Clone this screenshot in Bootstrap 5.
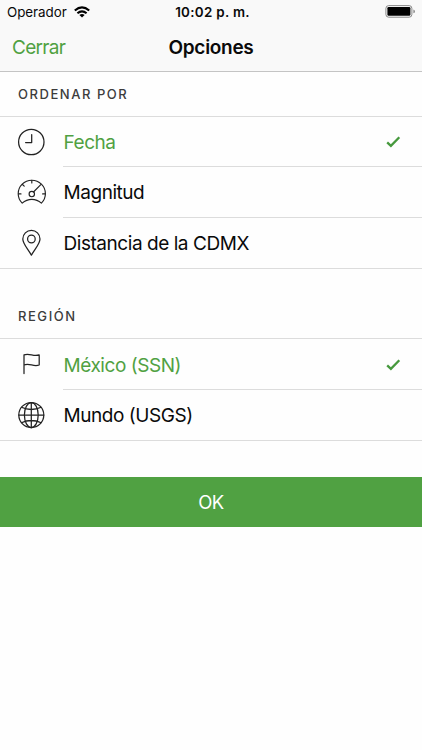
<!DOCTYPE html>
<html lang="es">
<head>
<meta charset="utf-8">
<meta name="viewport" content="width=device-width, initial-scale=1">
<title>Opciones</title>
<link href="https://cdn.jsdelivr.net/npm/bootstrap@5.3.0/dist/css/bootstrap.min.css" rel="stylesheet">
<style>
body{font-family:Inter,"Liberation Sans",sans-serif;color:#0a0a0a;font-size:19px;line-height:24px;background:#fefefe}
svg{display:block;flex:none}
.top-area{background:#f9f9f9;border-bottom:1px solid #c4c4c4;height:72px}
.status{height:23px;font-size:13.4px;line-height:22px;padding:0 7px}
.status-time{font-weight:600;letter-spacing:.3px;padding-left:3px}
.status-side{width:120px}
.carrier{letter-spacing:-.05px}
.wifi{margin-left:7px}
.title-bar{height:49px;padding:1px 12px 0}
.title-side{width:90px}
.title-link{color:#50a142;text-decoration:none;letter-spacing:-.7px}
.title-text{font-size:19px;font-weight:600;letter-spacing:-.3px}
.section-title{font-size:13px;line-height:20px;font-weight:500;letter-spacing:1.55px;color:#3c3c3c;margin:0;padding-left:18px}
.h-first{height:44px}
.h-second{height:69px}
.options{border-top:1px solid #dcdcdc;border-bottom:1px solid #dcdcdc;border-radius:0}
.option{height:50px;padding:0;border:0;background:transparent;color:inherit}
.options-sort .option:first-child{height:49px}
.option + .option{height:51px}
.option + .option .option-body{border-top:1px solid #dcdcdc}
.option-icon{width:63px;padding-left:17px}
.option-body{padding-right:21px;letter-spacing:-.45px}
.option-body span{padding:2px 0 0 .5px}
.options-region .chosen .option-body{padding-top:1px}
.option.chosen{color:#50a142}
.option-icon svg{stroke:#222;fill:none;stroke-width:1.25;stroke-linecap:round;stroke-linejoin:round}
.option-icon .gauge{stroke-width:1.15}
.ok{margin-top:36px;height:50px;border:0;border-radius:0;background:#50a142;color:#fff;font-size:18.5px;padding:2px 0 0;letter-spacing:-.5px}
</style>
<script src="https://cdn.jsdelivr.net/npm/bootstrap@5.3.0/dist/js/bootstrap.bundle.min.js"></script>
</head>
<body>
<header class="top-area">
  <div class="status d-flex justify-content-between align-items-center">
    <div class="status-side d-flex align-items-center">
      <span class="carrier">Operador</span>
      <svg class="wifi" width="16" height="12" viewBox="0.4 0 16 12" fill="none" stroke="#000" stroke-width="2.1"><path d="M1.2 4.5Q8.4-1.8 15.6 4.5M3.8 7.3Q8.4 3.3 13 7.3"/><path d="M8.4 11.6 5.8 9Q8.4 6.9 11 9Z" fill="#000" stroke="none"/></svg>
    </div>
    <div class="status-time">10:02 p. m.</div>
    <div class="status-side d-flex justify-content-end">
      <svg width="30" height="13" viewBox="0 0 30 13"><rect x=".9" y=".6" width="26" height="11.6" rx="2.8" fill="none" stroke="#888" stroke-width="1"/><rect x="2.4" y="2.1" width="23" height="8.6" rx="1.2" fill="#000"/><path d="M28.4 4.5Q30 5 30 6.4T28.4 8.3Z" fill="#888"/></svg>
    </div>
  </div>
  <nav class="title-bar d-flex justify-content-between align-items-center">
    <div class="title-side"><a class="title-link" href="#">Cerrar</a></div>
    <div class="title-text">Opciones</div>
    <div class="title-side"></div>
  </nav>
</header>
<main>
  <h2 class="section-title h-first d-flex align-items-center">ORDENAR POR</h2>
  <div class="options options-sort list-group">
    <div class="option chosen list-group-item d-flex">
      <div class="option-icon d-flex align-items-center"><svg width="29" height="28" viewBox="0 0 29 28"><circle cx="14.3" cy="14" r="12.7"/><path d="M14.7 6.5V14.5H8.6"/></svg></div>
      <div class="option-body flex-grow-1 d-flex align-items-center justify-content-between"><span>Fecha</span><svg width="15" height="12" viewBox="0 0 15 12" fill="none" stroke="#46993d" stroke-width="2.3"><path d="M1.2 6.4 4.9 9.9 13.3 1.2"/></svg></div>
    </div>
    <div class="option list-group-item d-flex">
      <div class="option-icon d-flex align-items-center"><svg class="gauge" width="30" height="28" viewBox="0 0 30 28"><path d="M5.2 25.2C2.7 22.7 1.2 19.5 1.2 15.8A13.6 13.6 0 0 1 28.4 15.8C28.4 19.5 26.9 22.7 24.4 25.2C18.8 20 10.8 20 5.2 25.2Z"/><path d="M14.8 2.3V5M1.5 15.9H4M25.6 15.9H28.1M5.5 6.5 7.2 8.2M16.5 14 23.8 6.7"/><circle cx="14.8" cy="16" r="2.7"/></svg></div>
      <div class="option-body flex-grow-1 d-flex align-items-center"><span>Magnitud</span></div>
    </div>
    <div class="option list-group-item d-flex">
      <div class="option-icon d-flex align-items-center"><svg width="29" height="28" viewBox="0 0 29 28"><path d="M14.4 26.2C11.8 20.8 5.8 15.1 5.8 9.9A8.6 8.6 0 0 1 23 9.9C23 15.1 17 20.8 14.4 26.2Z"/><circle cx="14.4" cy="10" r="3.8"/></svg></div>
      <div class="option-body flex-grow-1 d-flex align-items-center"><span>Distancia de la CDMX</span></div>
    </div>
  </div>
  <h2 class="section-title h-second d-flex align-items-end pb-2"><span class="mb-1">REGIÓN</span></h2>
  <div class="options options-region list-group">
    <div class="option chosen list-group-item d-flex">
      <div class="option-icon d-flex align-items-center"><svg width="29" height="28" viewBox="0 0 29 28"><path d="M7 23.5V4.9C12.5 2.7 16.5 7 22.2 4.9V15C16.5 17.1 12.5 12.8 7 15"/></svg></div>
      <div class="option-body flex-grow-1 d-flex align-items-center justify-content-between"><span>México (SSN)</span><svg width="15" height="12" viewBox="0 0 15 12" fill="none" stroke="#46993d" stroke-width="2.3"><path d="M1.2 6.4 4.9 9.9 13.3 1.2"/></svg></div>
    </div>
    <div class="option list-group-item d-flex">
      <div class="option-icon d-flex align-items-center"><svg width="29" height="28" viewBox="0 0 29 28"><circle cx="14.3" cy="14" r="12.5"/><ellipse cx="14.3" cy="14" rx="6.9" ry="12.5"/><path d="M14.3 1.5V26.5M1.8 14H26.8M4.4 6.3Q14.3 10.7 24.2 6.3M4.4 21.7Q14.3 17.3 24.2 21.7"/></svg></div>
      <div class="option-body flex-grow-1 d-flex align-items-center"><span>Mundo (USGS)</span></div>
    </div>
  </div>
  <button type="button" class="ok btn w-100 d-block">OK</button>
</main>
</body>
</html>
